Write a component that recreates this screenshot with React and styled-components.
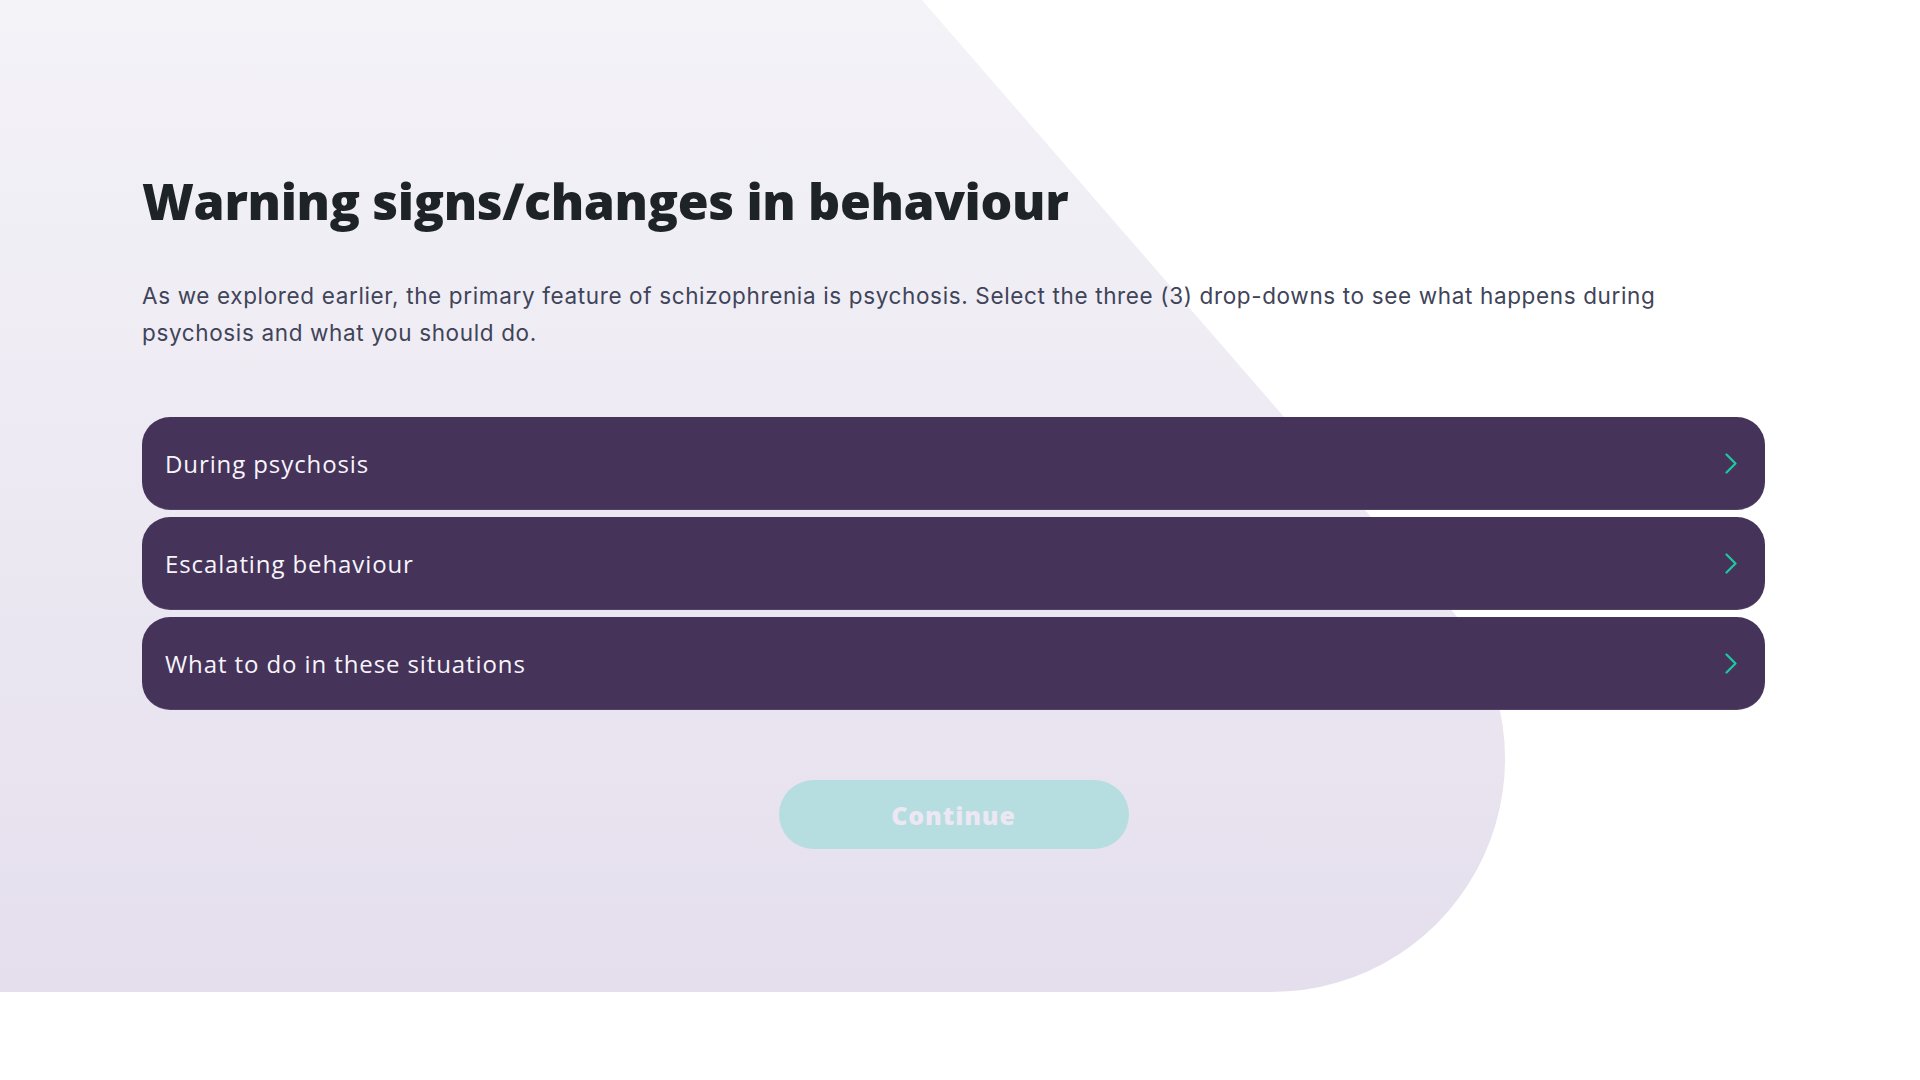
import React from "react";
import styled, { createGlobalStyle } from "styled-components";

const Global = createGlobalStyle`
  html, body { margin: 0; padding: 0; background: #ffffff; }
  body { width: 1920px; height: 1080px; overflow: hidden; }
  * { box-sizing: border-box; }
`;

const Page = styled.div`
  position: relative;
  width: 1920px;
  height: 1080px;
  background: #ffffff;
`;

const Backdrop = styled.svg`
  position: absolute;
  left: 0;
  top: 0;
  width: 1920px;
  height: 1080px;
  z-index: 0;
`;

const Content = styled.main`
  position: relative;
  z-index: 1;
  display: flex;
  flex-direction: column;
  padding: 171px 155px 0 142px;
`;

const Title = styled.h1`
  margin: 0;
  font-family: "Open Sans", "DejaVu Sans", sans-serif;
  font-weight: 800;
  font-size: 50px;
  line-height: 60px;
  letter-spacing: -0.35px;
  color: #1d2327;
`;

const Intro = styled.p`
  margin: 46px 0 0;
  font-family: "Inter", "Noto Sans", sans-serif;
  font-weight: 400;
  font-size: 22.5px;
  line-height: 37px;
  letter-spacing: 0.64px;
  color: #3f4459;
  max-width: 1575px;
`;

const List = styled.div`
  margin-top: 66px;
  display: flex;
  flex-direction: column;
  gap: 7px;
  width: 1623px;
`;

const Item = styled.button`
  display: flex;
  align-items: center;
  justify-content: space-between;
  height: 93px;
  width: 100%;
  padding: 0 28px 0 23px;
  border: none;
  border-radius: 28px;
  background: #45335a;
  box-shadow: inset 0 -1px 0 rgba(255, 255, 255, 0.08);
  cursor: pointer;
  text-align: left;
`;

const Label = styled.span`
  font-family: "Open Sans", "Noto Sans", sans-serif;
  font-weight: 500;
  font-size: 24px;
  letter-spacing: 0.9px;
  color: #f7f5fa;
`;

const Chevron = styled.svg`
  width: 12px;
  height: 21px;
  flex: none;
`;

const Actions = styled.div`
  display: flex;
  justify-content: center;
  width: 1623px;
  margin-top: 70px;
`;

const Continue = styled.button`
  width: 350px;
  height: 69px;
  border: none;
  border-radius: 35px;
  background: #b6dee0;
  font-family: "Open Sans", "DejaVu Sans", sans-serif;
  font-weight: 800;
  font-size: 25px;
  letter-spacing: 0.9px;
  color: #ece7f3;
  cursor: not-allowed;
`;

const items = ["During psychosis", "Escalating behaviour", "What to do in these situations"];

export default function App() {
  return (
    <Page>
      <Global />
      <Backdrop viewBox="0 0 1920 1080" aria-hidden="true">
        <defs>
          <linearGradient id="bg" x1="0" y1="0" x2="0" y2="1">
            <stop offset="0" stopColor="#f4f3f8" />
            <stop offset="1" stopColor="#e5dfed" />
          </linearGradient>
        </defs>
        <path
          d="M0 0 L922 0 L1447.9 605.6 A233.4 233.4 0 0 1 1271.6 992 L0 992 Z"
          fill="url(#bg)"
        />
      </Backdrop>
      <Content>
        <Title>Warning signs/changes in behaviour</Title>
        <Intro>
          As we explored earlier, the primary feature of schizophrenia is psychosis. Select the three (3) drop-downs to see what happens during psychosis and what you should do.
        </Intro>
        <List>
          {items.map((t) => (
            <Item key={t}>
              <Label>{t}</Label>
              <Chevron viewBox="0 0 12 21" fill="none">
                <polyline
                  points="1.5,1.5 10.5,10.5 1.5,19.5"
                  stroke="#1ccaa2"
                  strokeWidth="2.2"
                  strokeLinecap="round"
                  strokeLinejoin="round"
                />
              </Chevron>
            </Item>
          ))}
        </List>
        <Actions>
          <Continue disabled>Continue</Continue>
        </Actions>
      </Content>
    </Page>
  );
}
